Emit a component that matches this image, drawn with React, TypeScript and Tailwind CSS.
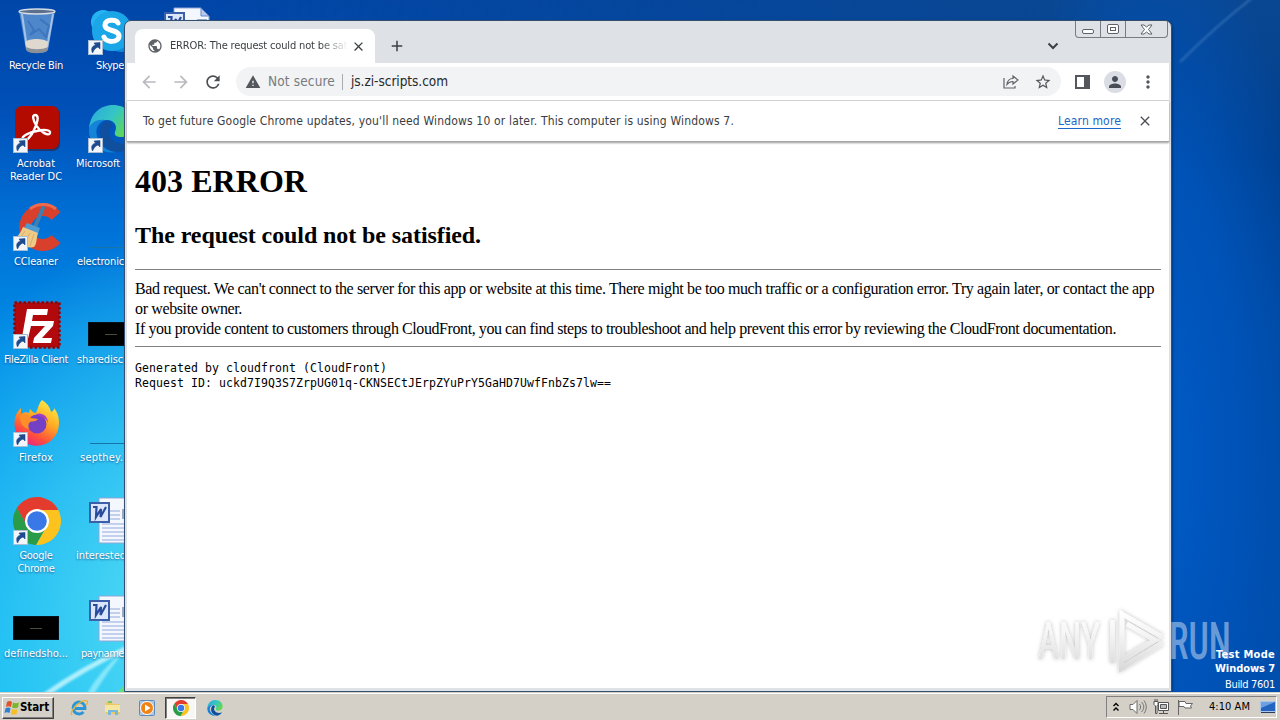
import { useLayoutEffect, useRef, useState } from "react"
import type { ReactNode } from "react"
import { clsx } from "clsx"
import { MdAdd, MdArrowBack, MdArrowForward, MdClose, MdMoreVert, MdPerson, MdPublic, MdRefresh, MdStarBorder, MdWarning } from "react-icons/md"

// Text tracked so that it fills exactly `w` pixels
function Fit({ w, children, className }: { w: number; children: string; className?: string }) {
  const ref = useRef<HTMLSpanElement>(null)
  const [spacing, setSpacing] = useState(0)

  useLayoutEffect(() => {
    const natural = ref.current!.getBoundingClientRect().width
    setSpacing((w - natural) / children.length)
  }, [])

  return (
    <span ref={ref} className={clsx("inline-block whitespace-pre", className)} style={{ letterSpacing: spacing }}>
      {children}
    </span>
  )
}

function ChromeLogo({ size }: { size: number }) {
  return (
    <svg width={size} height={size} viewBox="0 0 48 48">
      <path d="M3.8 11A24 24 0 0 1 45.3 13H24L14.5 29.5Z" fill="#e33b2e" />
      <path d="M45.3 13A24 24 0 0 1 22.9 48L33.5 29.5 24 13Z" fill="#fcc31e" />
      <path d="M22.9 48A24 24 0 0 1 3.8 11L14.5 29.5h19Z" fill="#2a9c48" />
      <circle cx="24" cy="24" r="12" fill="#fff" />
      <circle cx="24" cy="24" r="9.8" fill="#3b78e7" />
    </svg>
  )
}

function EdgeLogo({ size }: { size: number }) {
  return (
    <svg width={size} height={size} viewBox="0 0 48 48">
      <defs>
        <linearGradient id="edgeTop" x1="0" y1="0" x2="1" y2="0.5">
          <stop offset="0" stopColor="#2aa7e0" />
          <stop offset="0.55" stopColor="#35c6c4" />
          <stop offset="1" stopColor="#62d84e" />
        </linearGradient>
      </defs>
      <path d="M1 24C2 9 12 0 25 0c13 0 22 9 22 19 0 8-6 13-13 13-6 0-8-2-7-5 3-6-1-12-8-12C9 15 2 19 1 24Z" fill="url(#edgeTop)" />
      <path d="M1 24c2-7 9-10 16-9-7 3-10 9-8 16 2 9 10 16 20 16C13 50 0 39 1 24Z" fill="#1583d6" />
      <path d="M18 16c-9 5-9 30 12 31 7-1 12-5 15-10-9 4-20 1-23-6-2-5 0-8 2-10-1-3-3-5-6-5Z" fill="#0f4f9e" />
    </svg>
  )
}

function RecycleBin() {
  return (
    <svg width="48" height="48" viewBox="0 0 48 48">
      <path d="M6 4h36l-7 39c-2 4-19 4-22 0Z" fill="#79a9dc" fillOpacity="0.65" />
      <path d="M9 7l5 34M40 7l-6 34" stroke="#c7ddf2" strokeOpacity="0.7" strokeWidth="2" />
      <path d="M15 14l6 9-4 5 9-6 7 8 3-11-9-7" fill="none" stroke="#3269b6" strokeOpacity="0.6" strokeWidth="2" />
      <path d="M12 35c4-4 19-4 23 0l-1 8c-4 3-17 3-20 0Z" fill="#dfd8ce" />
      <path d="M13 40c6 3 16 3 22 0l-1 4c-4 3-17 3-20 0Z" fill="#8c9098" />
      <ellipse cx="24" cy="4.500" rx="18" ry="2.500" fill="#5c6f8c" stroke="#d6dde6" strokeWidth="1.300" />
    </svg>
  )
}

function SkypeIcon() {
  return (
    <svg width="48" height="48" viewBox="0 0 48 48">
      <circle cx="15" cy="15" r="12" fill="#25b4f2" />
      <circle cx="33" cy="33" r="12" fill="#0d8bd8" />
      <circle cx="24" cy="24" r="20" fill="#1ba6e8" />
      <path d="M30 16c-2-4-13-4-13 2 0 7 14 4 14 11 0 7-13 7-15 1" fill="none" stroke="#fff" strokeWidth="5" strokeLinecap="round" />
    </svg>
  )
}

function AcrobatIcon() {
  return (
    <svg width="48" height="48" viewBox="0 0 48 48">
      <rect x="3" y="2" width="44" height="44" rx="7" fill="#3c1420" fillOpacity="0.5" />
      <rect x="2" y="1" width="44" height="43" rx="7" fill="#b30b00" />
      <path d="M22 10c5 0 2 9-1 15-3 7-8 12-11 10-3-3 6-8 14-9 7-2 14-1 13 2-1 4-10-1-14-8-3-5-4-10-1-10Z" fill="none" stroke="#fff" strokeWidth="2.400" />
    </svg>
  )
}

function CCleanerIcon() {
  return (
    <svg width="48" height="48" viewBox="0 0 48 48">
      <path d="M43 13A17.500 17.500 0 1 0 43 36" fill="none" stroke="#d8402c" strokeWidth="12" />
      <path d="M43 6A21 21 0 0 0 17 6" fill="none" stroke="#ee6a4c" strokeWidth="3" />
      <path d="M30 5l-8 19" stroke="#3f7eae" strokeWidth="4" strokeLinecap="round" />
      <path d="M14 20l13 5-2 6-14-6Z" fill="#4d9bd0" />
      <path d="M10 24l15 6c-2 7-1 11-4 14C14 46 6 41 2 35c4-2 6-7 8-11Z" fill="#efca87" />
      <path d="M12 28l-6 9M17 30l-6 11M21 31l-4 12" stroke="#d9ae68" />
    </svg>
  )
}

function FileZillaIcon() {
  return (
    <svg width="48" height="48" viewBox="0 0 48 48">
      <rect x="1.500" y="1.500" width="45" height="45" fill="#b20a0c" stroke="#8b0708" strokeWidth="2.500" strokeDasharray="2.500 2" />
      <path d="M14 8h21l-1 6H20l-1 6h11l-1 5H18l-4 17H8Z" fill="#fff" />
      <path d="M25 20h16l-1 5-11 12h10l-1 5H20l1-5 11-12h-8Z" fill="#fff" />
    </svg>
  )
}

function FirefoxIcon() {
  return (
    <svg width="48" height="48" viewBox="0 0 48 48">
      <defs>
        <linearGradient id="fox" x1="0.8" y1="0" x2="0.25" y2="1">
          <stop offset="0" stopColor="#fff04a" />
          <stop offset="0.4" stopColor="#ffac22" />
          <stop offset="0.75" stopColor="#ff4e3d" />
          <stop offset="1" stopColor="#e0218c" />
        </linearGradient>
      </defs>
      <path d="M29 1c5 3 8 7 9 12 3-1 3-3 3-4 7 8 6 21 1 28-6 9-17 12-27 8C3 41-1 27 3 16c1-3 3-5 5-7v6c3-2 6-2 8-1l1-4c2 2 3 4 6 4 2-5 3-10 6-13Z" fill="url(#fox)" />
      <circle cx="24" cy="25" r="9.500" fill="#7340c6" />
      <path d="M7 17c5-3 9-1 11 2l7 1c-2 3-6 2-8 3-2 2-2 4-1 7-6-1-9-6-9-13Z" fill="#ff9029" />
      <path d="M23 15c6-2 12 2 12 9-1-3-4-6-7-6Z" fill="#a43ec9" />
    </svg>
  )
}

function WordDoc() {
  return (
    <svg width="48" height="48" viewBox="0 0 48 48">
      <path d="M11 1h27l8 8v37H11Z" fill="#f4f7fe" stroke="#8fa5d5" />
      <path d="M38 1v8h8Z" fill="#b9c9ee" stroke="#6585ca" />
      <path d="M22 14h10M22 18h10M22 22h10M14 27h30M14 31h30M14 35h30M14 39h30M14 43h30" stroke="#90a9dc" />
      <rect x="34" y="12" width="10" height="10" fill="#9eabc5" />
      <rect x="2" y="6" width="19" height="19" fill="#dce6fb" stroke="#3c5fa9" strokeWidth="2" />
      <path d="M5 10h3.500L8 20l5-8-.5 8L18 10" fill="none" stroke="#294d9c" strokeWidth="2.200" />
    </svg>
  )
}

function Shortcut() {
  return (
    <svg width="15" height="15" viewBox="0 0 15 15" className="absolute bottom-0 left-0">
      <rect x="0.500" y="0.500" width="14" height="14" fill="#f2f5f9" stroke="#a9bed3" />
      <path d="M4.500 13c-2-5 0-7 3-8L6 3l6-.5V9l-2-2c-3 1-4 3-5.500 6Z" fill="#1e4b8d" stroke="#1e4b8d" strokeWidth="0.600" />
    </svg>
  )
}

function DesktopIcon({ icon, lines, shortcut, className }: { icon: ReactNode; lines: [string, number][]; shortcut?: boolean; className?: string }) {
  return (
    <div className="flex h-[98px] w-[75px] flex-col pt-[7px]">
      <div className="relative ml-[14px] h-12 w-12 shrink-0">
        {icon}
        {shortcut && <Shortcut />}
      </div>
      <div className={clsx("mt-1 flex flex-col text-[11px] leading-[13px] text-white [text-shadow:0_1px_2px_#00205a99]", className ? "items-start" : "items-center pr-[1px]", className)}>
        {lines.map(([text, w]) => <Fit key={text} w={w}>{text}</Fit>)}
      </div>
    </div>
  )
}

const thumb = <div className="mt-[21px] flex h-6 w-[46px] items-center justify-center border border-[#07121c] bg-black"><div className="h-px w-3 bg-[#4b4b3e]" /></div>
const thinLine = <div className="mt-[44px] ml-[2px] h-px w-12 bg-[#1674a8]" />

function Desktop() {
  return (
    <>
      <svg width="1280" height="692" className="absolute inset-0">
        <defs>
          <filter id="soft"><feGaussianBlur stdDeviation="1.2" /></filter>
        </defs>
        <path d="M42 694Q78 668 128 645V650Q86 670 51 694Z" fill="#d5fbff" fillOpacity="0.75" filter="url(#soft)" />
        <path d="M87 694Q99 671 126 649Q107 672 94 694Z" fill="#b5f7ff" fillOpacity="0.6" filter="url(#soft)" />
        <path d="M116 694l9-10v10Z" fill="#6ce36c" fillOpacity="0.8" />
        <path d="M1180 62Q1215 27 1252 -2" stroke="#6c9dd6" strokeOpacity="0.4" strokeWidth="2" fill="none" filter="url(#soft)" />
      </svg>
      <div className="relative -ml-px flex">
        <div className="flex flex-col">
          <DesktopIcon icon={<RecycleBin />} lines={[["Recycle Bin", 54]]} />
          <DesktopIcon icon={<AcrobatIcon />} shortcut lines={[["Acrobat", 38], ["Reader DC", 52]]} />
          <DesktopIcon icon={<CCleanerIcon />} shortcut lines={[["CCleaner", 44]]} />
          <DesktopIcon icon={<FileZillaIcon />} shortcut lines={[["FileZilla Client", 64]]} />
          <DesktopIcon icon={<FirefoxIcon />} shortcut lines={[["Firefox", 34]]} />
          <DesktopIcon icon={<ChromeLogo size={48} />} shortcut lines={[["Google", 33], ["Chrome", 37]]} />
          <DesktopIcon icon={thumb} lines={[["definedsho...", 64]]} />
        </div>
        <div className="flex flex-col">
          <DesktopIcon icon={<SkypeIcon />} shortcut lines={[["Skype", 28]]} className="pl-[22px]" />
          <DesktopIcon icon={<EdgeLogo size={48} />} shortcut lines={[["Microsoft", 44]]} className="pl-[2px]" />
          <DesktopIcon icon={thinLine} lines={[["electronic", 47]]} className="pl-[3px]" />
          <DesktopIcon icon={thumb} lines={[["sharedisc", 46]]} className="pl-[3px]" />
          <DesktopIcon icon={thinLine} lines={[["septhey.", 43]]} className="pl-[6px]" />
          <DesktopIcon icon={<WordDoc />} lines={[["interested", 50]]} className="pl-[2px]" />
          <DesktopIcon icon={<WordDoc />} lines={[["payname", 43]]} className="pl-[7px]" />
        </div>
        <DesktopIcon icon={<WordDoc />} lines={[]} />
      </div>
    </>
  )
}

function TitleBar() {
  return (
    <div className="flex h-[42px] shrink-0 rounded-t-md bg-[#dee1e6]">
      <div className="ml-[8px] mt-[8px] flex h-[34px] w-[240px] items-center rounded-t-lg bg-white pl-3">
        <MdPublic className="size-4 text-[#5f6368]" />
        <div className="ml-[7px] w-[178px] overflow-hidden text-[11px] leading-4 text-[#3c4043] [mask-image:linear-gradient(to_right,black_150px,transparent_178px)]">
          <Fit w={203}>ERROR: The request could not be satisfied</Fit>
        </div>
        <MdClose className="ml-[3px] size-[15px] text-[#3c4043]" />
      </div>
      <MdAdd className="ml-[13px] mt-[16px] size-[18px] text-[#3c4043]" />
      <svg width="12" height="8" viewBox="0 0 12 8" className="ml-auto mt-[21px]">
        <path d="M1.500 1.500L6 6l4.500-4.500" fill="none" stroke="#3c4043" strokeWidth="2" />
      </svg>
      <div className="ml-[16px] mr-px flex h-[17px] w-[93px] divide-x divide-[#767b84] rounded-b-[4px] border border-t-0 border-[#767b84]">
        <div className="flex w-[25px] items-center justify-center pt-1">
          <div className="h-[5px] w-3 rounded-[2px] border border-[#5d6169] bg-white" />
        </div>
        <div className="flex w-[25px] items-center justify-center">
          <div className="flex h-[10px] w-3 items-center justify-center rounded-[2px] border border-[#5d6169] bg-white">
            <div className="h-1 w-[6px] border border-[#5d6169]" />
          </div>
        </div>
        <div className="flex flex-1 items-center justify-center">
          <svg width="13" height="11" viewBox="0 0 13 11">
            <path d="M1 1h3l2.500 2L9 1h3L8.500 5.500 12 10H9L6.500 8 4 10H1l3.500-4.500Z" fill="#fff" stroke="#5d6169" />
          </svg>
        </div>
      </div>
    </div>
  )
}

function Toolbar() {
  return (
    <div className="flex h-[38px] shrink-0 items-center border-b border-[#d5d7da] bg-white pl-3">
      <MdArrowBack className="size-5 text-[#b9bbbe]" />
      <MdArrowForward className="ml-3 size-5 text-[#b9bbbe]" />
      <MdRefresh className="ml-3 size-5 text-[#4c5055]" />
      <div className="ml-[13px] flex h-[29px] w-[825px] items-center rounded-full bg-[#f1f3f4] pl-[9px] pr-[9px] text-[13.5px]">
        <MdWarning className="size-4 text-[#54585d]" />
        <Fit w={67} className="ml-[7px] text-[#777b80]">Not secure</Fit>
        <div className="ml-[7px] h-4 w-px bg-[#a9acb0]" />
        <Fit w={97} className="ml-[8px] text-[#27292c]">js.zi-scripts.com</Fit>
        <svg width="16" height="15" viewBox="0 0 16 15" className="ml-auto" fill="none" stroke="#5f6368" strokeWidth="1.200">
          <path d="M1 4v10h11v-2M4 10.500C4.500 6 7 4.500 10 4.500V2l5 4-5 4V7.500c-3 0-4.500 1-6 3Z" />
        </svg>
        <MdStarBorder className="ml-[15px] size-[18px] text-[#54585d]" />
      </div>
      <svg width="15" height="14" viewBox="0 0 15 14" className="ml-[14px]">
        <path d="M1 1h13v12H1Z" fill="none" stroke="#54585d" strokeWidth="2" />
        <path d="M9 0h6v14H9Z" fill="#54585d" />
      </svg>
      <div className="ml-[14px] flex size-[22px] items-center justify-center rounded-full bg-[#dadde3]">
        <MdPerson className="size-[18px] text-[#494d55]" />
      </div>
      <MdMoreVert className="ml-3 size-5 text-[#54585d]" />
    </div>
  )
}

function Infobar() {
  return (
    <div className="relative z-10 flex h-[41px] shrink-0 items-center border-b border-[#a5a7a9] bg-white pl-4 pr-[16px] text-[12px] shadow-[0_1px_2px_#00000066]">
      <Fit w={591} className="text-[#3a3d41]">To get future Google Chrome updates, you'll need Windows 10 or later. This computer is using Windows 7.</Fit>
      <a className="ml-auto mr-4 border-b border-[#1a66c9] leading-[14px] text-[#1a66c9]"><Fit w={63}>Learn more</Fit></a>
      <MdClose className="size-4 text-[#4c5055]" />
    </div>
  )
}

function ErrorPage() {
  return (
    <div className="flex-1 bg-white px-2 pt-[21px] font-['Liberation_Serif',serif] text-black">
      <h1 className="text-[32px] leading-[37px] font-bold"><Fit w={172}>403 ERROR</Fit></h1>
      <h2 className="mt-[22px] text-[24px] leading-[27px] font-bold"><Fit w={346}>The request could not be satisfied.</Fit></h2>
      <hr className="mt-[20px] border-[#808080]" />
      <div className="mt-[9px] flex flex-col items-start text-[16px] leading-[20px]">
        <Fit w={1019}>Bad request. We can't connect to the server for this app or website at this time. There might be too much traffic or a configuration error. Try again later, or contact the app</Fit>
        <Fit w={107}>or website owner.</Fit>
        <Fit w={981}>If you provide content to customers through CloudFront, you can find steps to troubleshoot and help prevent this error by reviewing the CloudFront documentation.</Fit>
      </div>
      <hr className="mt-[7px] border-[#808080]" />
      <div className="mt-[14px] flex flex-col items-start font-['DejaVu_Sans_Mono',monospace] text-[11.5px] leading-[15px]">
        <Fit w={252}>Generated by cloudfront (CloudFront)</Fit>
        <Fit w={476}>Request ID: uckd7I9Q3S7ZrpUG01q-CKNSECtJErpZYuPrY5GaHD7UwfFnbZs7lw==</Fit>
      </div>
    </div>
  )
}

function Watermark() {
  return (
    <svg width="200" height="72" viewBox="0 0 200 72" className="absolute left-[1034px] top-[606px] font-['Roboto',sans-serif]">
      <defs>
        <linearGradient id="mark" gradientUnits="userSpaceOnUse" x1="0" y1="6" x2="0" y2="64">
          <stop offset="0" stopColor="#ffffff" />
          <stop offset="0.35" stopColor="#f6f6f6" />
          <stop offset="1" stopColor="#d9d9d9" />
        </linearGradient>
        <filter id="halo" x="-20%" y="-20%" width="140%" height="140%">
          <feDropShadow dx="0" dy="0" stdDeviation="2" floodColor="#000" floodOpacity="0.28" />
        </filter>
      </defs>
      <g filter="url(#halo)">
        <text x="4" y="53" fontSize="51" textLength="62" lengthAdjust="spacingAndGlyphs" fill="url(#mark)">ANY</text>
        <g fill="none" stroke="url(#mark)" strokeWidth="4.500">
          <path d="M78.500 57V14" />
          <path d="M88 52V8L128 31" />
          <path d="M93 18L121 34 87 54v9L128 37" />
        </g>
      </g>
      <text x="135" y="53" fontSize="51" fontWeight="500" textLength="62" lengthAdjust="spacingAndGlyphs" fill="#c5daf2" fillOpacity="0.55">RUN</text>
    </svg>
  )
}

function WindowsFlag() {
  return (
    <svg width="16" height="16" viewBox="0 0 16 16">
      <path d="M3 2c2-1.500 4-1 5 0L7 7C5 6 3.500 6 2 7Z" fill="#e3522b" />
      <path d="M9 2.500c2 1 4 1 6 0L14 7.500c-2 1-4 1-6 0Z" fill="#79b72c" />
      <path d="M1.500 8.500c2-1.500 4-1 5 0L5.500 13c-1.500-1-3.500-1-5 0Z" fill="#2c7fd4" />
      <path d="M8 9c2 1 4 1 5.500 0l-1 5c-2 1-4 1-5.500 0Z" fill="#f6be21" />
    </svg>
  )
}

function Taskbar() {
  return (
    <div className="flex h-7 shrink-0 items-center border-t border-[#d4d0c8] bg-[#d4d0c8] pl-[2px] pr-[3px] shadow-[inset_0_1px_0_#fff]">
      <button className="mt-[2px] flex h-[22px] w-[52px] items-center border border-t-white border-r-[#404040] border-b-[#404040] border-l-white pl-[1px] shadow-[inset_-1px_-1px_0_#808080]">
        <WindowsFlag />
        <Fit w={29} className="text-[11.5px] font-bold text-black">Start</Fit>
      </button>
      <svg width="18" height="18" viewBox="0 0 18 18" className="ml-4 mt-[2px]">
        <path d="M13.500 13A6 6 0 1 1 15 9.500H5" fill="none" stroke="#2b95d8" strokeWidth="2.800" />
        <path d="M2 16C-1 12 11 0 17 2c1 1 0 3-1 4" fill="none" stroke="#e7b52c" strokeWidth="1.300" />
      </svg>
      <svg width="18" height="18" viewBox="0 0 18 18" className="ml-4 mt-[2px]">
        <path d="M2 3h6l1 2h7v10H2Z" fill="#e9c964" />
        <path d="M4 2h4v2H4Z" fill="#7ec26c" />
        <path d="M1 6h15v7H1Z" fill="#f7e6a0" />
        <path d="M4 16v-5h10v5h-3v-3H7v3Z" fill="#75b8e0" />
      </svg>
      <svg width="18" height="18" viewBox="0 0 18 18" className="ml-4 mt-[2px]">
        <rect x="1.500" y="1.500" width="15" height="15" rx="1" fill="#a9c8e8" stroke="#5e8cba" />
        <circle cx="9" cy="9" r="6.500" fill="#f08318" stroke="#fff" />
        <path d="M7 5.500l5.500 3.500L7 12.500Z" fill="#fff" />
      </svg>
      <div className="ml-[9px] mt-[2px] flex h-[22px] w-[31px] items-center justify-center border border-t-[#404040] border-r-white border-b-white border-l-[#404040] bg-[#f8f7f5] shadow-[inset_1px_1px_0_#808080]">
        <ChromeLogo size={16} />
      </div>
      <div className="ml-[11px] mt-[2px]"><EdgeLogo size={16} /></div>
      <div className="ml-auto mt-[1px] flex h-[22px] w-[171px] items-center border border-t-[#808080] border-r-white border-b-white border-l-[#808080] pl-[5px]">
        <svg width="8" height="10" viewBox="0 0 8 10" fill="none" stroke="#000" strokeWidth="1.400">
          <path d="M1.500 4L4 1.500 6.500 4M1.500 8.500L4 6l2.500 2.500" />
        </svg>
        <svg width="18" height="16" viewBox="0 0 18 16" className="ml-[9px]" stroke="#6b6b6b" fill="none">
          <path d="M1 5.500h3l4-4v13l-4-4H1Z" fill="#fff" />
          <path d="M10.500 5c1.500 2 1.500 4 0 6M12.500 3c3 3 3 7 0 10M15 1.500c3 4 3 9 0 13" strokeWidth="0.900" />
        </svg>
        <svg width="17" height="16" viewBox="0 0 17 16" className="ml-[6px]" stroke="#555" fill="#fff">
          <path d="M5.500 3.500h10v8h-10Z" />
          <path d="M7.500 5.500h6v4h-6Z" fill="#bbb" />
          <path d="M6 14.500h9M10.500 12v2" />
          <path d="M1 2.500h4v3L4 7v7.500H2.500V7L1 5.500ZM2 0v2M4 0v2" />
        </svg>
        <svg width="17" height="16" viewBox="0 0 17 16" className="ml-[7px]" stroke="#666" fill="#fff">
          <path d="M1.500 1v15M2 2.500h6l1 2h6.500l-2 2.500 1 2H8l-1-1.500H2Z" />
        </svg>
        <Fit w={41} className="ml-[15px] text-[11px] text-black">4:10 AM</Fit>
        <svg width="16" height="14" viewBox="0 0 16 14" className="ml-[10px]">
          <rect x="0.500" y="1.500" width="15" height="10" fill="#2463c0" stroke="#adc4e5" />
          <path d="M1 2h14L1 8Z" fill="#6da1e4" />
          <path d="M1 12.500h14" stroke="#283c5c" />
        </svg>
      </div>
    </div>
  )
}

export default function App() {
  return (
    <div className="flex h-[720px] w-[1280px] flex-col overflow-hidden font-['DejaVu_Sans_Condensed','DejaVu_Sans',sans-serif] font-stretch-condensed">
      <div className="relative h-[692px] shrink-0 overflow-hidden bg-[radial-gradient(ellipse_380px_400px_at_240px_620px,#6ce6f6_0%,#46d4f4_30%,#08b4f300_100%),linear-gradient(to_bottom,#0046a8_0px,#0050b8_110px,#0070d6_220px,#008be6_340px,#009cf0_480px,#00b2f4_692px)]">
        <div className="absolute inset-y-0 right-0 w-[1100px] bg-[radial-gradient(ellipse_170px_560px_at_970px_460px,#005cc8_0%,#0052b6_55%,transparent_100%),linear-gradient(to_bottom,#0a4792_0px,#003f8e_160px,#00479e_340px,#004ca8_692px)] [mask-image:linear-gradient(to_right,transparent,black_900px)]" />
        <Desktop />
        <div className="absolute left-[124px] top-[20px] flex h-[672px] w-[1048px] flex-col rounded-t-[7px] border border-[#35506f] bg-[#dee1e6] pb-[3px] pl-[2px] pr-[2px] shadow-[1px_1px_2px_#00204080]">
          <TitleBar />
          <Toolbar />
          <Infobar />
          <ErrorPage />
        </div>
        <Watermark />
        <div className="absolute bottom-0 right-[5px] flex flex-col items-end text-[11px] leading-[14px] text-white">
          <Fit w={59} className="font-bold">Test Mode</Fit>
          <Fit w={60} className="font-bold">Windows 7</Fit>
          <Fit w={50} className="mt-[2px]">Build 7601</Fit>
        </div>
      </div>
      <Taskbar />
    </div>
  )
}
